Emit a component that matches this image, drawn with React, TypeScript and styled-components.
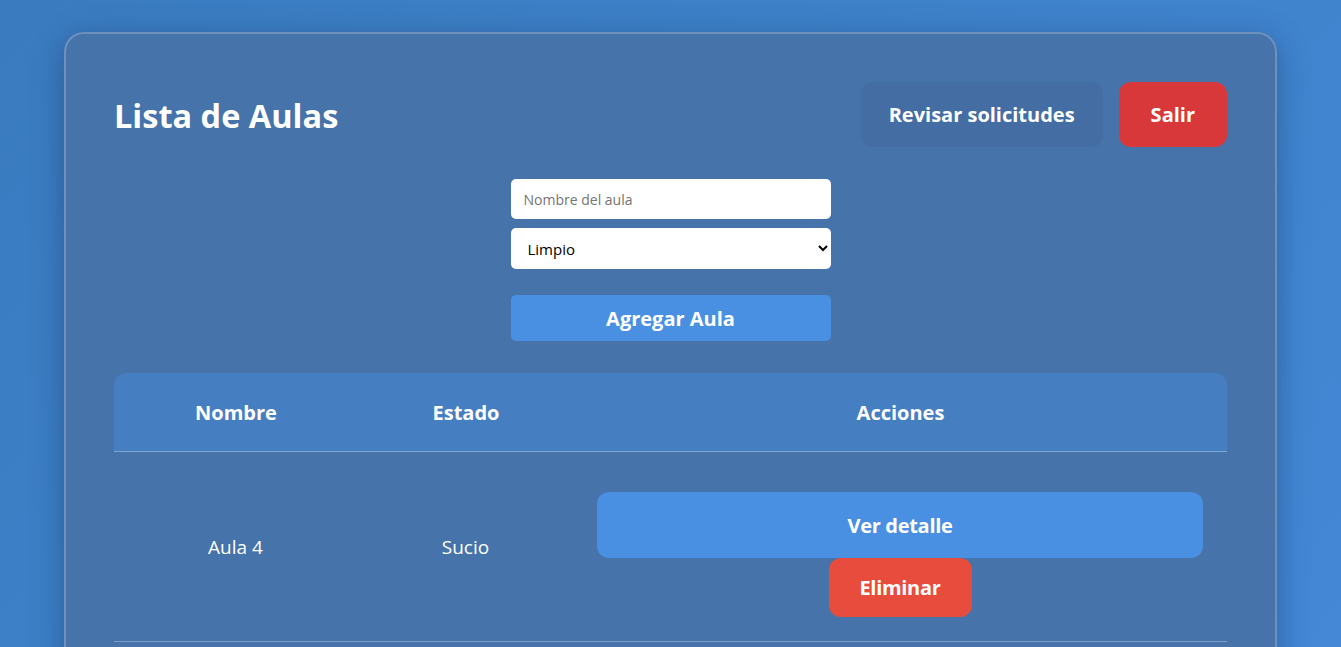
import React from "react";
import styled, { createGlobalStyle } from "styled-components";

const Global = createGlobalStyle`
  html, body { margin: 0; padding: 0; }
  body {
    font-family: "Open Sans", "Noto Sans", sans-serif;
    background: linear-gradient(135deg, #3a7bbf 0%, #3f83cc 50%, #4589d8 100%);
    min-height: 647px;
    overflow: hidden;
  }
`;

const Page = styled.div`
  padding: 32px 64px 0;
`;

const Card = styled.div`
  background: #4573aa;
  border: 2px solid rgba(255, 255, 255, 0.22);
  border-radius: 20px;
  box-shadow: 0 8px 32px rgba(20, 50, 100, 0.45);
  padding: 48px 48px 40px;
  min-height: 700px;
`;

const Header = styled.div`
  display: flex;
  align-items: center;
  justify-content: space-between;
`;

const Title = styled.h1`
  margin: 2px 0 0;
  font-size: 32.5px;
  font-weight: 700;
  color: #fff;
`;

const Actions = styled.div`
  display: flex;
  gap: 16px;
`;

const HeadButton = styled.button<{ $variant: "muted" | "danger" }>`
  height: 65px;
  padding: 0 ${(p) => (p.$variant === "muted" ? "28px" : "32px")};
  border: none;
  border-radius: 12px;
  font-family: inherit;
  font-size: 20px;
  font-weight: 700;
  color: #fff;
  background: ${(p) => (p.$variant === "muted" ? "#446ea3" : "#d9383a")};
`;

const Form = styled.div`
  width: 320px;
  margin: 32px auto 0;
  display: flex;
  flex-direction: column;
`;

const Input = styled.input`
  box-sizing: border-box;
  height: 40px;
  border: none;
  border-radius: 5px;
  padding: 0 13px;
  font-family: inherit;
  font-size: 14px;
  background: #fff;
  &::placeholder { color: #757575; }
`;

const Select = styled.select`
  box-sizing: border-box;
  height: 41px;
  margin-top: 9px;
  border: none;
  border-radius: 5px;
  padding: 0 13px;
  font-family: inherit;
  font-size: 15px;
  background: #fff;
  color: #000;
`;

const AddButton = styled.button`
  height: 46px;
  margin-top: 26px;
  border: none;
  border-radius: 5px;
  background: #4a90e2;
  color: #fff;
  font-family: inherit;
  font-size: 20px;
  font-weight: 700;
`;

const Table = styled.table`
  width: 100%;
  margin-top: 32px;
  border-collapse: collapse;
  color: #fff;
`;

const HeadRow = styled.tr`
  background: #467ec2;
  th:first-child { border-top-left-radius: 12px; }
  th:last-child { border-top-right-radius: 12px; }
`;

const Th = styled.th<{ $w?: number }>`
  height: 78px;
  font-size: 20px;
  font-weight: 700;
  border-bottom: 1px solid rgba(255, 255, 255, 0.3);
  width: ${(p) => (p.$w ? `${p.$w}px` : "auto")};
  padding: 0;
`;

const Row = styled.tr`
  border-bottom: 1px solid rgba(255, 255, 255, 0.3);
`;

const Td = styled.td`
  text-align: center;
  font-size: 19px;
  padding: 20px 24px 20px 23px;
`;

const CellActions = styled.div`
  display: flex;
  flex-direction: column;
  align-items: center;
`;

const RowButton = styled.button<{ $variant: "primary" | "danger" }>`
  border: none;
  border-radius: 12px;
  color: #fff;
  font-family: inherit;
  font-size: 20px;
  font-weight: 700;
  letter-spacing: -0.3px;
  background: ${(p) => (p.$variant === "primary" ? "#4a90e2" : "#e74c3c")};
  width: ${(p) => (p.$variant === "primary" ? "100%" : "143px")};
  height: ${(p) => (p.$variant === "primary" ? "66px" : "59px")};
  margin: ${(p) => (p.$variant === "primary" ? "20px 0 0" : "0 0 4px")};
`;

export default function App() {
  return (
    <>
      <Global />
      <Page>
        <Card>
          <Header>
            <Title>Lista de Aulas</Title>
            <Actions>
              <HeadButton $variant="muted">Revisar solicitudes</HeadButton>
              <HeadButton $variant="danger">Salir</HeadButton>
            </Actions>
          </Header>
          <Form>
            <Input placeholder="Nombre del aula" />
            <Select defaultValue="Limpio">
              <option>Limpio</option>
              <option>Sucio</option>
            </Select>
            <AddButton>Agregar Aula</AddButton>
          </Form>
          <Table>
            <thead>
              <HeadRow>
                <Th $w={244}>Nombre</Th>
                <Th $w={216}>Estado</Th>
                <Th>Acciones</Th>
              </HeadRow>
            </thead>
            <tbody>
              <Row>
                <Td>Aula 4</Td>
                <Td>Sucio</Td>
                <Td>
                  <CellActions>
                    <RowButton $variant="primary">Ver detalle</RowButton>
                    <RowButton $variant="danger">Eliminar</RowButton>
                  </CellActions>
                </Td>
              </Row>
            </tbody>
          </Table>
        </Card>
      </Page>
    </>
  );
}
